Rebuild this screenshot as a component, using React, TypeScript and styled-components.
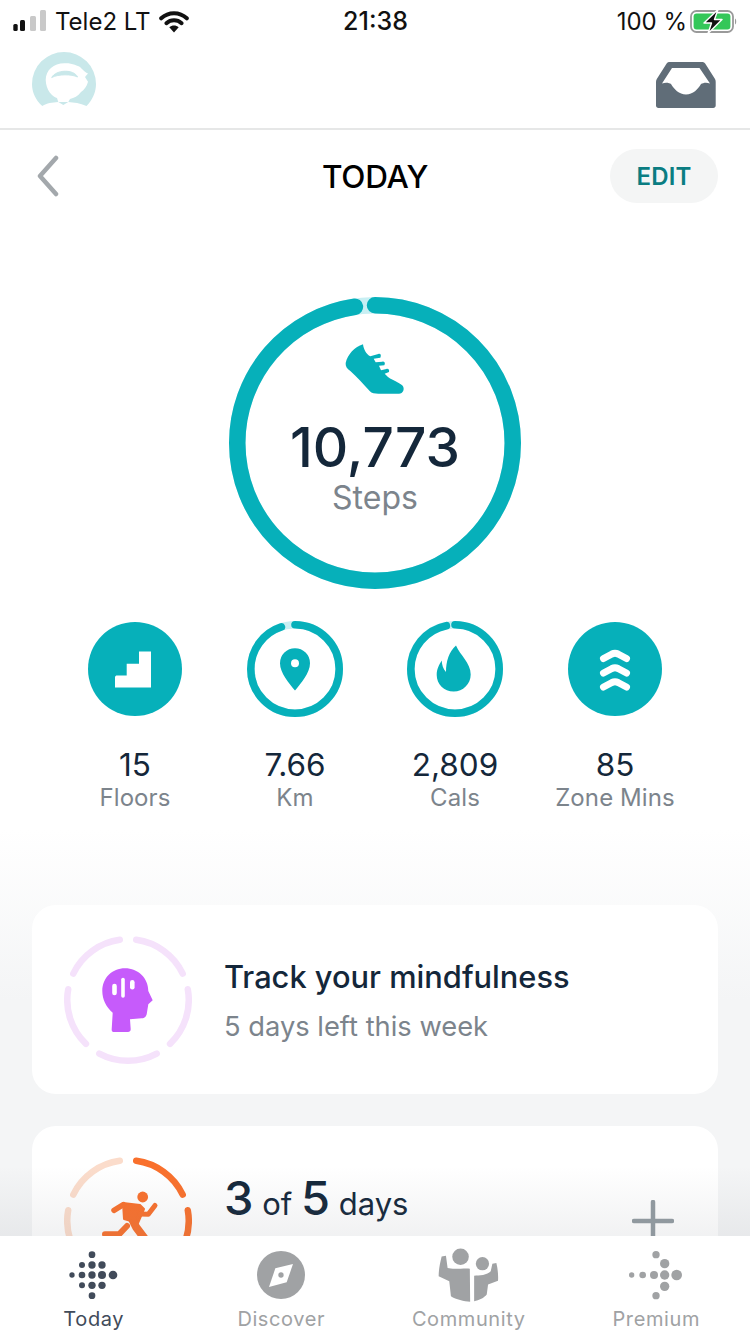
import React from "react";
import styled, { createGlobalStyle } from "styled-components";

const Global = createGlobalStyle`
  html, body { margin: 0; padding: 0; background: #fff; }
  * { box-sizing: border-box; }
  body { font-family: Inter, "Noto Sans", sans-serif; }
`;

const TEAL = "#06b0ba";
const TRACK = "#c8eff3";

const Page = styled.div`
  position: relative;
  width: 750px;
  height: 1334px;
  overflow: hidden;
  background: linear-gradient(#fff 0, #fff 830px, #f4f5f6 1000px, #f4f5f6 100%);
`;

const StatusBar = styled.div`
  height: 42px;
  padding: 0 12px 0 13px;
  display: grid;
  grid-template-columns: 1fr auto 1fr;
  align-items: center;
  font-size: 24px;
  color: #111;
  background: #fff;
`;

const StatusLeft = styled.div`
  display: flex;
  align-items: center;
  gap: 8px;
`;

const StatusRight = styled.div`
  display: flex;
  align-items: center;
  justify-content: flex-end;
  gap: 3px;
`;

const Clock = styled.span`
  font-size: 25px;
  font-weight: 500;
`;

const Header = styled.header`
  height: 88px;
  padding: 10px 34px 20px 32px;
  display: flex;
  justify-content: space-between;
  align-items: flex-end;
  background: #fff;
  border-bottom: 2px solid #e6e7e7;
`;

const NavRow = styled.nav`
  padding: 19px 32px 0;
  display: grid;
  grid-template-columns: 1fr auto 1fr;
  align-items: center;
`;

const BackIcon = styled.svg`
  margin-left: 5px;
`;

const Title = styled.h1`
  margin: 0;
  font-size: 31.5px;
  font-weight: 500;
  color: #000;
  letter-spacing: -0.2px;
`;

const EditButton = styled.button`
  justify-self: end;
  width: 108px;
  height: 54px;
  border: 0;
  border-radius: 27px;
  background: #f4f5f5;
  color: #0a7d82;
  font: 600 24px Inter, sans-serif;
  letter-spacing: 0.1px;
`;

const Hero = styled.section`
  position: relative;
  width: 292px;
  height: 292px;
  margin: 94px auto 0;
`;

const HeroContent = styled.div`
  position: absolute;
  inset: 45px 0 0;
  display: flex;
  flex-direction: column;
  align-items: center;
`;

const StepCount = styled.div`
  margin-top: 19px;
  font-size: 55px;
  line-height: 66px;
  font-weight: 500;
  color: #14273a;
`;

const StepLabel = styled.div`
  font-size: 32px;
  line-height: 36px;
  color: #7c848c;
`;

const Metrics = styled.section`
  margin: 32px 55px 0;
  display: grid;
  grid-template-columns: repeat(4, 160px);
`;

const Metric = styled.div`
  display: flex;
  flex-direction: column;
  align-items: center;
`;

const MetricValue = styled.div`
  margin-top: 29px;
  font-size: 31.5px;
  line-height: 38px;
  font-weight: 400;
  color: #14273a;
`;

const MetricLabel = styled.div`
  font-size: 24px;
  line-height: 28px;
  letter-spacing: 0.1px;
  color: #7c848c;
  white-space: nowrap;
`;

const Cards = styled.section`
  margin: 93px 32px 0;
  display: flex;
  flex-direction: column;
  gap: 32px;
`;

const Card = styled.article`
  height: 189px;
  padding: 0 32px;
  display: flex;
  align-items: center;
  gap: 32px;
  border-radius: 24px;
  background: #fff;
`;

const CardText = styled.div`
  padding-top: 2px;
  display: flex;
  flex-direction: column;
  gap: 14px;
`;

const CardTitle = styled.div`
  font-size: 30.8px;
  line-height: 38px;
  font-weight: 500;
  color: #14273a;
`;

const CardSub = styled.div`
  font-size: 27.3px;
  line-height: 34px;
  color: #7c848c;
`;

const DaysLine = styled.div<{ $raise: number }>`
  margin-top: ${(p) => -p.$raise}px;
  margin-right: auto;
  font-size: 31px;
  line-height: 52px;
  color: #14273a;
`;

const BigNumber = styled.span`
  font-size: 47px;
  font-weight: 500;
`;

const PlusIcon = styled.svg`
  margin-right: 12px;
`;

const TabBar = styled.footer`
  position: absolute;
  left: 0;
  right: 0;
  bottom: 0;
  height: 98px;
  padding-top: 12px;
  display: grid;
  grid-template-columns: repeat(4, 1fr);
  background: #fff;
  &::before {
    content: "";
    position: absolute;
    left: 0;
    right: 0;
    top: -70px;
    height: 70px;
    background: linear-gradient(rgba(120, 125, 135, 0), rgba(120, 125, 135, 0.1));
  }
`;

const Tab = styled.div<{ $active?: boolean }>`
  display: flex;
  flex-direction: column;
  align-items: center;
  font-size: 20px;
  line-height: 26px;
  font-weight: 400;
  letter-spacing: 0.6px;
  color: ${(p) => (p.$active ? "#414b5a" : "#a0a2a4")};
`;

const TabIcon = styled.svg`
  display: block;
  height: 54px;
  margin-bottom: 4px;
`;

/* Circular arc drawn clockwise from 12 o'clock, with rounded ends */
function Arc({ size, stroke, sweep, color, start = 0 }: { size: number; stroke: number; sweep: number; color: string; start?: number }) {
  const r = (size - stroke) / 2;
  return (
    <circle
      cx={size / 2}
      cy={size / 2}
      r={r}
      fill="none"
      stroke={color}
      strokeWidth={stroke}
      strokeLinecap="round"
      pathLength={360}
      strokeDasharray={`${sweep} ${360 - sweep}`}
      transform={`rotate(${start - 90} ${size / 2} ${size / 2})`}
    />
  );
}

function SegmentRing({ colors, children }: { colors: string[]; children: React.ReactNode }) {
  return (
    <svg width="128" height="128" viewBox="0 0 128 128" style={{ flex: "none" }}>
      {colors.map((c, i) => (
        <Arc key={i} size={128} stroke={6.5} sweep={56.4} color={c} start={7.8 + i * 72} />
      ))}
      {children}
    </svg>
  );
}

function MetricRing({ sweep, children }: { sweep: number; children: React.ReactNode }) {
  return (
    <svg width="96" height="96" viewBox="0 0 96 96">
      <circle cx="48" cy="48" r="44.2" fill="none" stroke={TRACK} strokeWidth="7.6" />
      <Arc size={96} stroke={7.6} sweep={sweep} color={TEAL} />
      {children}
    </svg>
  );
}

function MetricDisc({ children }: { children: React.ReactNode }) {
  return (
    <svg width="96" height="96" viewBox="0 0 96 96">
      <circle cx="48" cy="48" r="47" fill={TEAL} />
      {children}
    </svg>
  );
}

function Signal() {
  return (
    <svg width="34" height="22" viewBox="0 0 34 22">
      <rect x="0.3" y="14" width="4.4" height="7" rx="1.5" fill="#111" />
      <rect x="7" y="10" width="5" height="11" rx="1.5" fill="#111" />
      <rect x="17" y="6" width="6" height="15" rx="1.5" fill="#c9c9c9" />
      <rect x="27" y="0" width="6" height="21" rx="1.5" fill="#c9c9c9" />
    </svg>
  );
}

function Wifi() {
  return (
    <svg width="30" height="23" viewBox="0 0 30 23">
      <path d="M2.200 8.300C9.500 1.500 20.500 1.500 27.800 8.300" fill="none" stroke="#111" strokeWidth="4" strokeLinecap="round" />
      <path d="M7.400 13.200C11.800 9.400 18.200 9.400 22.600 13.200" fill="none" stroke="#111" strokeWidth="4" strokeLinecap="round" />
      <path d="M10.300 17.300C13 14.800 17 14.800 19.700 17.300L15 22.500Z" fill="#111" />
    </svg>
  );
}

function Battery() {
  return (
    <svg width="48" height="25" viewBox="0 0 48 25">
      <rect x="1" y="2" width="42" height="21" rx="5.500" fill="none" stroke="#9a9a9a" strokeWidth="1.800" />
      <rect x="3.600" y="4.600" width="36.800" height="15.800" rx="3" fill="#34c759" />
      <path d="M45 9.500C46.600 10 46.600 15 45 15.500Z" fill="#9a9a9a" />
      <path d="M28 0.500L14 14H21.500L18 24.500L32 10.500H24.500Z" fill="#111" stroke="#fff" strokeWidth="1.400" strokeLinejoin="round" />
    </svg>
  );
}

function Mascot() {
  return (
    <svg width="64" height="56" viewBox="0 0 64 56">
      <path d="M10.300 54C3.500 48 0 40 0 32A32 32 0 0 1 64 32C64 40 60.500 48 54.500 54C48 51 42 50.500 36.300 50L31.300 53L26.300 50C20 50.500 15 51 10.300 54Z" fill="#c9e8ea" />
      <path d="M13.700 28C13.700 18 22 11 33 11.300C40 11 46 14 48 15C51 18 54 21 56 21.500L53 25L56 29.700C55 34 52 38 49 40C46 44 42 46 38 47L36.300 50H26.300L25 46C20 44.500 14 38 13.700 28Z" fill="#fff" />
      <path d="M19.700 25.500C24 17.500 42 17 45.500 25C40 22 26 22 19.700 25.500Z" fill="#c9e8ea" stroke="#c9e8ea" strokeWidth="1" strokeLinejoin="round" />
    </svg>
  );
}

function Inbox() {
  return (
    <svg width="60" height="46" viewBox="0 0 60 46">
      <path
        d="M13 0H46.500C48 0 49 1 49.800 2.500L59 17C59.600 18 59.700 19 59.700 20V43.500C59.700 45 58.700 46 57.200 46H2.500C1 46 0 45 0 43.500V20C0 19 0.200 18 0.800 17L10 2.500C11 1 11.500 0 13 0Z
           M16 6L6 21.500C10 20 13.500 21 15 22C18 27 23 32.500 30 32.500C37 32.500 42 27 45 22C47 21 50 20 54 21.500L43.500 6Z"
        fill="#606d78"
        fillRule="evenodd"
      />
    </svg>
  );
}

function Shoe() {
  return (
    <svg width="63" height="53" viewBox="373 175 189 159">
      <path
        d="M430 182C405 190 384 212 378 238C377 248 382 256 392 262C412 280 432 302 450 322C456 329 466 330 476 330H538C550 330 556 316 549 306C538 296 522 292 505 280L495 270L508 265C510 258 505 254 500 256L484 260L478 246L494 245C498 238 494 233 488 234L468 236L462 225L482 222C486 214 482 209 476 211L452 218C440 212 432 198 430 182Z"
        fill={TEAL}
      />
    </svg>
  );
}

function TodayIcon() {
  const dots: [number, number, number][] = [
    [185, 400, 10], [185, 431, 11], [185, 461, 11], [185, 492, 11], [185, 523, 10],
    [155, 431, 9], [155, 461, 10], [155, 492, 9],
    [215, 431, 11], [215, 461, 12], [215, 492, 11],
    [125, 461, 8], [248, 461, 13],
  ];
  return (
    <TabIcon width="54" viewBox="110 380 162 162">
      {dots.map(([x, y, r]) => <circle key={`${x}-${y}`} cx={x} cy={y} r={r} fill="#414b5a" />)}
    </TabIcon>
  );
}

function PremiumIcon() {
  const dots: [number, number, number][] = [
    [694, 461, 8], [727, 461, 10], [761, 461, 12], [793, 461, 14], [829, 461, 16],
    [793, 427, 14], [793, 495, 14], [767, 400, 11], [767, 523, 11],
  ];
  return (
    <TabIcon width="54" viewBox="686 380 162 162">
      {dots.map(([x, y, r]) => <circle key={`${x}-${y}`} cx={x} cy={y} r={r} fill="#a0a2a4" />)}
    </TabIcon>
  );
}

export default function App() {
  return (
    <Page>
      <Global />
      <StatusBar>
        <StatusLeft>
          <Signal />
          <span>Tele2 LT</span>
          <Wifi />
        </StatusLeft>
        <Clock>21:38</Clock>
        <StatusRight>
          <span>100 %</span>
          <Battery />
        </StatusRight>
      </StatusBar>

      <Header>
        <Mascot />
        <Inbox />
      </Header>

      <NavRow>
        <BackIcon width="22" height="42" viewBox="0 0 22 42">
          <path d="M19 3L3 21L19 39" fill="none" stroke="#a3a8ac" strokeWidth="4.500" strokeLinecap="round" strokeLinejoin="round" />
        </BackIcon>
        <Title>TODAY</Title>
        <EditButton>EDIT</EditButton>
      </NavRow>

      <Hero>
        <svg width="292" height="292" viewBox="0 0 292 292">
          <circle cx="146" cy="146" r="137.750" fill="none" stroke={TRACK} strokeWidth="16.500" />
          <Arc size={292} stroke={16.5} sweep={351.6} color={TEAL} />
        </svg>
        <HeroContent>
          <Shoe />
          <StepCount>10,773</StepCount>
          <StepLabel>Steps</StepLabel>
        </HeroContent>
      </Hero>

      <Metrics>
        <Metric>
          <MetricDisc>
            <path d="M28 56.500C28 55 29 54.500 30 54.500H39.700V42.800H52V30.500H64V66.500H28Z" fill="#fff" />
          </MetricDisc>
          <MetricValue>15</MetricValue>
          <MetricLabel>Floors</MetricLabel>
        </Metric>
        <Metric>
          <MetricRing sweep={342}>
            <path d="M48 69.500C42 62 33 52 33 42.200A15 15 0 0 1 63 42.200C63 52 54 62 48 69.500Z" fill={TEAL} />
            <circle cx="48" cy="42.200" r="4" fill="#fff" />
          </MetricRing>
          <MetricValue>7.66</MetricValue>
          <MetricLabel>Km</MetricLabel>
        </Metric>
        <Metric>
          <MetricRing sweep={348.700}>
            <path d="M49 24.500C53 34 63.700 42 63.700 53.500C63.700 63 56 70.500 46.700 70.500C37 70.500 29.700 63 29.700 54C29.700 48 32 44 34.700 39.500C35 44 36 48 39 51C39 40 42 31 49 24.500Z" fill={TEAL} />
          </MetricRing>
          <MetricValue>2,809</MetricValue>
          <MetricLabel>Cals</MetricLabel>
        </Metric>
        <Metric>
          <MetricDisc>
            {[37.5, 52, 66].map((y) => (
              <path key={y} d={`M36.500 ${y}L45 ${y - 4.5}Q48 ${y - 6} 51 ${y - 4.5}L59.500 ${y}`} fill="none" stroke="#fff" strokeWidth="7" strokeLinecap="round" strokeLinejoin="round" />
            ))}
          </MetricDisc>
          <MetricValue>85</MetricValue>
          <MetricLabel>Zone Mins</MetricLabel>
        </Metric>
      </Metrics>

      <Cards>
        <Card>
          <SegmentRing colors={["#f5e2fb", "#f5e2fb", "#f5e2fb", "#f5e2fb", "#f5e2fb"]}>
            <path d="M47.700 93.300L48.700 76.700C42 71 38.300 63 38.300 55C38.300 42 48 32.300 61 32.300C74 32.300 84.300 42 84.300 55L88.700 64.300L84.300 68.300L82.700 78.300C82 81 80 82.300 77.700 82.300L66 83.300L66.700 93.300C66.700 95 65.500 96 64 96H50C48.500 96 47.500 95 47.700 93.300Z" fill="#c65bfb" />
            <g fill="#fff">
              <rect x="48.200" y="47.700" width="4.600" height="11.500" rx="2.300" />
              <rect x="57.200" y="41.700" width="3.600" height="20" rx="1.800" />
              <rect x="66" y="44" width="4.600" height="9.500" rx="2.300" />
            </g>
          </SegmentRing>
          <CardText>
            <CardTitle>Track your mindfulness</CardTitle>
            <CardSub>5 days left this week</CardSub>
          </CardText>
        </Card>
        <Card>
          <SegmentRing colors={["#f9702c", "#f9702c", "#f9702c", "#fbdccb", "#fbdccb"]}>
            <circle cx="78.700" cy="40" r="5.400" fill="#f9702c" />
            <path d="M59 46L76 48L80 52L74 66L60 62Z" fill="#f9702c" stroke="#f9702c" strokeWidth="2" strokeLinejoin="round" />
            <path d="M50 53.300L59.300 47.700" fill="none" stroke="#f9702c" strokeWidth="5.500" strokeLinecap="round" />
            <path d="M76 57L84.300 57.300L91 48.500" fill="none" stroke="#f9702c" strokeWidth="5" strokeLinecap="round" strokeLinejoin="round" />
            <path d="M68 62L72 70L81 82" fill="none" stroke="#f9702c" strokeWidth="8" strokeLinejoin="round" />
            <path d="M41 77.300H55L63 69" fill="none" stroke="#f9702c" strokeWidth="6" strokeLinecap="round" strokeLinejoin="round" />
          </SegmentRing>
          <DaysLine $raise={39}>
            <BigNumber>3</BigNumber> of <BigNumber>5</BigNumber> days
          </DaysLine>
          <PlusIcon width="42" height="42" viewBox="0 0 42 42">
            <path d="M21 2V40M2 21H40" stroke="#929ba1" strokeWidth="4.500" strokeLinecap="round" />
          </PlusIcon>
        </Card>
      </Cards>

      <TabBar>
        <Tab $active>
          <TodayIcon />
          Today
        </Tab>
        <Tab>
          <TabIcon width="54" viewBox="675 380 162 162">
            <circle cx="756" cy="461" r="72" fill="#a0a2a4" />
            <path d="M792 428L773 483L720 497L739 441Z" fill="#fff" />
            <circle cx="756" cy="461" r="8" fill="#a0a2a4" />
          </TabIcon>
          Discover
        </Tab>
        <Tab>
          <TabIcon width="65" viewBox="105 380 196 162">
            <g fill="#a0a2a4">
              <circle cx="179" cy="406" r="25" />
              <circle cx="245" cy="427" r="20" />
              <path d="M122 405L135 403L140 440C155 445 190 440 207 442L208 542C190 540 165 535 150 525L145 480L113 465C113 445 117 425 122 405Z" />
              <path d="M220 463C235 463 260 462 270 450L275 427L287 425C292 445 293 465 292 478L262 490L258 520C250 530 235 538 220 540Z" />
            </g>
          </TabIcon>
          Community
        </Tab>
        <Tab>
          <PremiumIcon />
          Premium
        </Tab>
      </TabBar>
    </Page>
  );
}
